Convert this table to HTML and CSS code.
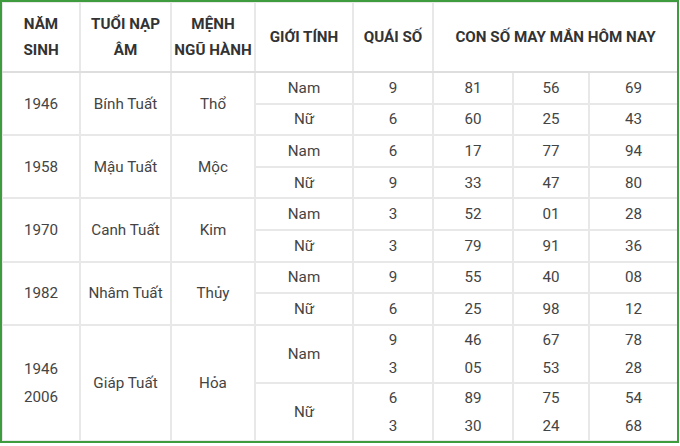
FILE: index.html
```html
<!DOCTYPE html>
<html lang="vi">
<head>
<meta charset="utf-8">
<link rel="stylesheet" href="styles.css">
</head>
<body>
<div class="frame">
<table class="tbl">
<colgroup>
<col class="c1"><col class="c2"><col class="c3"><col class="c4"><col class="c5"><col class="c6"><col class="c7"><col class="c8">
</colgroup>
<thead>
<tr class="head">
<th>NĂM<br>SINH</th>
<th>TUỔI NẠP<br>ÂM</th>
<th>MỆNH<br>NGŨ HÀNH</th>
<th>GIỚI TÍNH</th>
<th>QUÁI SỐ</th>
<th colspan="3">CON SỐ MAY MẮN HÔM NAY</th>
</tr>
</thead>
<tbody>
<tr class="r"><td rowspan="2">1946</td><td rowspan="2">Bính Tuất</td><td rowspan="2">Thổ</td><td>Nam</td><td>9</td><td>81</td><td>56</td><td>69</td></tr>
<tr class="r"><td>Nữ</td><td>6</td><td>60</td><td>25</td><td>43</td></tr>
<tr class="r"><td rowspan="2">1958</td><td rowspan="2">Mậu Tuất</td><td rowspan="2">Mộc</td><td>Nam</td><td>6</td><td>17</td><td>77</td><td>94</td></tr>
<tr class="r"><td>Nữ</td><td>9</td><td>33</td><td>47</td><td>80</td></tr>
<tr class="r"><td rowspan="2">1970</td><td rowspan="2">Canh Tuất</td><td rowspan="2">Kim</td><td>Nam</td><td>3</td><td>52</td><td>01</td><td>28</td></tr>
<tr class="r"><td>Nữ</td><td>3</td><td>79</td><td>91</td><td>36</td></tr>
<tr class="r"><td rowspan="2">1982</td><td rowspan="2">Nhâm Tuất</td><td rowspan="2">Thủy</td><td>Nam</td><td>9</td><td>55</td><td>40</td><td>08</td></tr>
<tr class="r"><td>Nữ</td><td>6</td><td>25</td><td>98</td><td>12</td></tr>
<tr class="big"><td rowspan="2" class="two">1946<br>2006</td><td rowspan="2">Giáp Tuất</td><td rowspan="2">Hỏa</td><td>Nam</td><td class="two">9<br>3</td><td class="two">46<br>05</td><td class="two">67<br>53</td><td class="two">78<br>28</td></tr>
<tr class="big"><td>Nữ</td><td class="two">6<br>3</td><td class="two">89<br>30</td><td class="two">75<br>24</td><td class="two">54<br>68</td></tr>
</tbody>
</table>
</div>
</body>
</html>
```
FILE: styles.css
```css
html, body {
  margin: 0;
  padding: 0;
  background: #ffffff;
}
.frame {
  width: 675px;
  height: 439px;
  border: 2px solid #3e9b3e;
  overflow: hidden;
  background: #fff;
}
.tbl {
  width: 676px;
  border-collapse: collapse;
  table-layout: fixed;
  font-family: Roboto, "Liberation Sans", sans-serif;
  font-size: 15.2px;
  color: #444;
  margin-top: -1px;
  margin-left: -1px;
}
.c1 { width: 78px; }
.c2 { width: 91px; }
.c3 { width: 84px; }
.c4 { width: 98px; }
.c5 { width: 80px; }
.c6 { width: 80px; }
.c7 { width: 76px; }
.c8 { width: 89px; }
.tbl th, .tbl td {
  border: 2px solid #e8e8e8;
  text-align: center;
  vertical-align: middle;
  padding: 0;
}
.tbl th {
  font-weight: 700;
  color: #333;
  line-height: 26px;
  height: 68px;
  border-bottom: 2px solid #dedede;
}
.r td {
  height: 29.6px;
  line-height: 20px;
}
.big td {
  height: 56px;
}
.two {
  line-height: 28px;
}
```
